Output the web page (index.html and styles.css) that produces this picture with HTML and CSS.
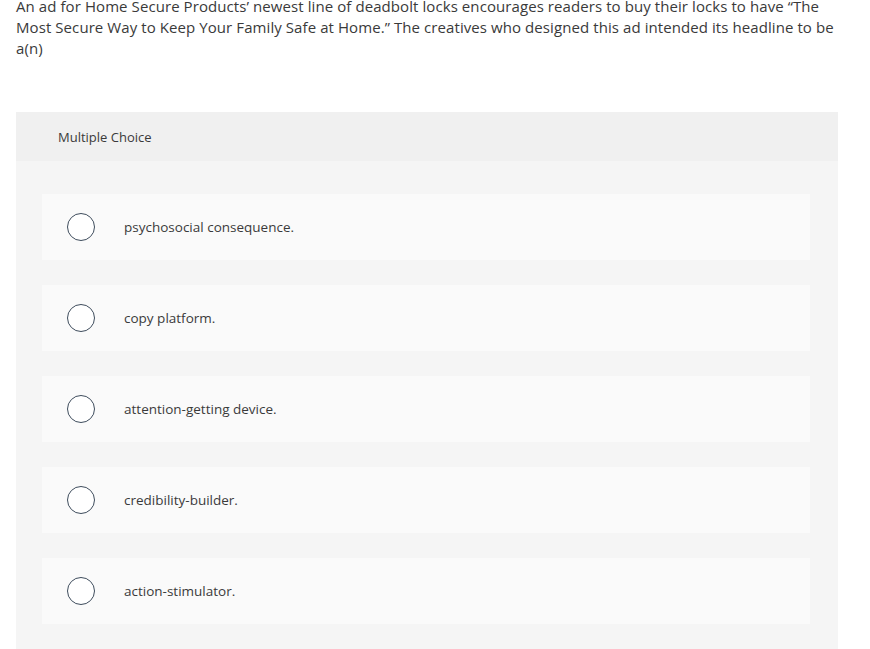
FILE: index.html
```html
<!DOCTYPE html>
<html>
<head>
<meta charset="utf-8">
<link rel="stylesheet" href="styles.css">
</head>
<body>
<p class="question">An ad for Home Secure Products’ newest line of deadbolt locks encourages readers to buy their locks to have “The Most Secure Way to Keep Your Family Safe at Home.” The creatives who designed this ad intended its headline to be a(n)</p>
<section class="panel">
  <header class="panel-head">Multiple Choice</header>
  <div class="panel-body">
    <label class="option"><span class="radio"></span><span class="opt-text">psychosocial consequence.</span></label>
    <label class="option"><span class="radio"></span><span class="opt-text">copy platform.</span></label>
    <label class="option"><span class="radio"></span><span class="opt-text">attention-getting device.</span></label>
    <label class="option"><span class="radio"></span><span class="opt-text">credibility-builder.</span></label>
    <label class="option"><span class="radio"></span><span class="opt-text">action-stimulator.</span></label>
  </div>
</section>
</body>
</html>
```

FILE: styles.css
```css
html, body {
  margin: 0;
  padding: 0;
  background: #ffffff;
}
body {
  font-family: "Open Sans", "Lato", sans-serif;
  color: #333333;
  padding: 0 32px 0 16px;
}
.question {
  margin: -4px 0 0 0;
  font-size: 15px;
  letter-spacing: 0.08px;
  line-height: 21px;
  color: #3a3a3a;
}
.panel {
  margin-top: 53px;
  width: 822px;
  background: #f5f5f5;
}
.panel-head {
  height: 49px;
  background: #f0f0f0;
  display: flex;
  align-items: center;
  padding-left: 42px;
  font-size: 13px;
  color: #3a3a3a;
}
.panel-body {
  padding: 33px 28px 30px 26px;
  display: flex;
  flex-direction: column;
  gap: 25px;
}
.option {
  height: 66px;
  background: #fafafa;
  display: flex;
  align-items: center;
  padding-left: 25px;
}
.radio {
  width: 26px;
  height: 26px;
  border: 1.5px solid #3e4c5c;
  border-radius: 50%;
  background: #ffffff;
  flex: none;
}
.opt-text {
  margin-left: 29px;
  font-size: 13.5px;
  color: #3a3a3a;
}
```
